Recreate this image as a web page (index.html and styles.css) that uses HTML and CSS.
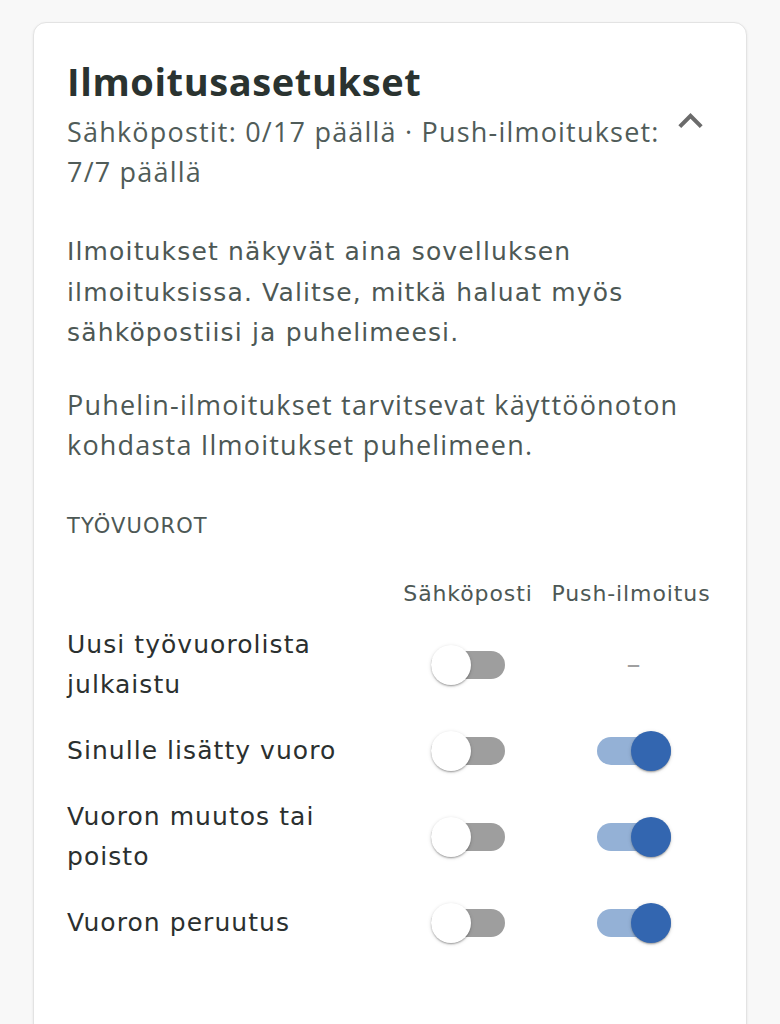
FILE: index.html
```html
<!DOCTYPE html>
<html lang="fi">
<head>
<meta charset="utf-8">
<title>Ilmoitusasetukset</title>
<link rel="stylesheet" href="styles.css">
</head>
<body>
<section class="card">
  <header class="card-header">
    <div class="header-text">
      <h1 class="title">Ilmoitusasetukset</h1>
      <p class="summary">Sähköpostit: 0/17 päällä · Push-ilmoitukset: 7/7 päällä</p>
    </div>
    <button class="collapse-btn" aria-label="Pienennä">
      <svg class="chevron" viewBox="6 8 12 7.41" width="25" height="15"><path d="M7.41 15.41L12 10.83l4.59 4.58L18 14l-6-6-6 6z" fill="#6b6b6b"/></svg>
    </button>
  </header>

  <p class="intro">Ilmoitukset näkyvät aina sovelluksen ilmoituksissa. Valitse, mitkä haluat myös sähköpostiisi ja puhelimeesi.</p>
  <p class="note">Puhelin-ilmoitukset tarvitsevat käyttöönoton kohdasta Ilmoitukset puhelimeen.</p>

  <h2 class="group-title">TYÖVUOROT</h2>

  <div class="settings-grid">
    <div class="col-head-spacer"></div>
    <div class="col-head">Sähköposti</div>
    <div class="col-head">Push-ilmoitus</div>

    <div class="row-label">Uusi työvuorolista julkaistu</div>
    <div class="cell"><span class="switch"><span class="track"></span><span class="thumb"></span></span></div>
    <div class="cell cell-push"><span class="dash">–</span></div>

    <div class="row-label">Sinulle lisätty vuoro</div>
    <div class="cell"><span class="switch"><span class="track"></span><span class="thumb"></span></span></div>
    <div class="cell cell-push"><span class="switch on"><span class="track"></span><span class="thumb"></span></span></div>

    <div class="row-label">Vuoron muutos tai poisto</div>
    <div class="cell"><span class="switch"><span class="track"></span><span class="thumb"></span></span></div>
    <div class="cell cell-push"><span class="switch on"><span class="track"></span><span class="thumb"></span></span></div>

    <div class="row-label">Vuoron peruutus</div>
    <div class="cell"><span class="switch"><span class="track"></span><span class="thumb"></span></span></div>
    <div class="cell cell-push"><span class="switch on"><span class="track"></span><span class="thumb"></span></span></div>
  </div>
</section>
</body>
</html>
```

FILE: styles.css
```css
html, body {
  margin: 0;
  padding: 0;
  background: #f8f8f8;
}

body {
  font-family: "DejaVu Sans", "Open Sans", sans-serif;
  color: #4d5855;
}

.card {
  box-sizing: border-box;
  margin: 22px 0 0 33px;
  width: 714px;
  min-height: 1100px;
  background: #ffffff;
  border: 1px solid #e3e3e3;
  border-radius: 13px;
  box-shadow: 0 1px 3px rgba(0, 0, 0, 0.08);
  padding: 35px 33px 40px 33px;
}

.card-header {
  display: flex;
  align-items: flex-start;
  gap: 12px;
}

.header-text {
  flex: 1;
}

.title {
  margin: 0 0 8px 0;
  font-family: "Open Sans", "Liberation Sans", sans-serif;
  font-weight: 700;
  font-size: 38px;
  line-height: 46px;
  letter-spacing: 0.6px;
  color: #2a3330;
}

.summary {
  margin: 0;
  font-family: "Open Sans", "Liberation Sans", sans-serif;
  font-weight: 400;
  font-size: 27px;
  line-height: 40px;
  letter-spacing: 1.2px;
  color: #505c59;
}

.collapse-btn {
  border: 0;
  background: transparent;
  padding: 0;
  margin: 55px 10px 0 0;
  width: 26px;
  height: 16px;
  display: flex;
  align-items: flex-start;
  justify-content: center;
  cursor: pointer;
}

.chevron {
  display: block;
}

.intro {
  margin: 40px 0 0 0;
  font-size: 25px;
  line-height: 40.5px;
  letter-spacing: 1.15px;
  color: #4d5855;
}

.note {
  margin: 31px 0 0 0;
  font-family: "Open Sans", "Liberation Sans", sans-serif;
  font-size: 27px;
  line-height: 40px;
  letter-spacing: 1.2px;
  color: #4d5855;
}

.group-title {
  margin: 47px 0 0 0;
  font-size: 21px;
  font-weight: 400;
  line-height: 28px;
  letter-spacing: 1.1px;
  color: #4d5855;
}

.settings-grid {
  margin-top: 38px;
  display: grid;
  grid-template-columns: 1fr 134px 164px;
  column-gap: 14px;
  row-gap: 26px;
  align-items: center;
}

.col-head {
  text-align: center;
  font-size: 22px;
  line-height: 32px;
  letter-spacing: 0.9px;
  white-space: nowrap;
  color: #4d5855;
  margin-bottom: -11px;
}

.row-label {
  font-size: 25px;
  line-height: 40px;
  letter-spacing: 1.05px;
  color: #2b302f;
}

.cell {
  display: flex;
  justify-content: center;
  align-items: center;
}

.cell-push {
  padding-left: 5px;
}

.dash {
  font-size: 28px;
  line-height: 40px;
  color: #a0a0a0;
}

.switch {
  position: relative;
  display: block;
  width: 74px;
  height: 40px;
}

.track {
  position: absolute;
  left: 0;
  right: 0;
  top: 6px;
  height: 28px;
  border-radius: 14px;
  background: #9e9e9e;
}

.thumb {
  position: absolute;
  top: 0;
  left: 0;
  width: 40px;
  height: 40px;
  border-radius: 50%;
  background: #ffffff;
  box-shadow: 0 2px 2px -1px rgba(0, 0, 0, 0.25), 0 1px 2px rgba(0, 0, 0, 0.14), 0 1px 4px rgba(0, 0, 0, 0.12);
}

.switch.on .track {
  background: #94b1d6;
}

.switch.on .thumb {
  left: 34px;
  background: #3366b0;
}
```
